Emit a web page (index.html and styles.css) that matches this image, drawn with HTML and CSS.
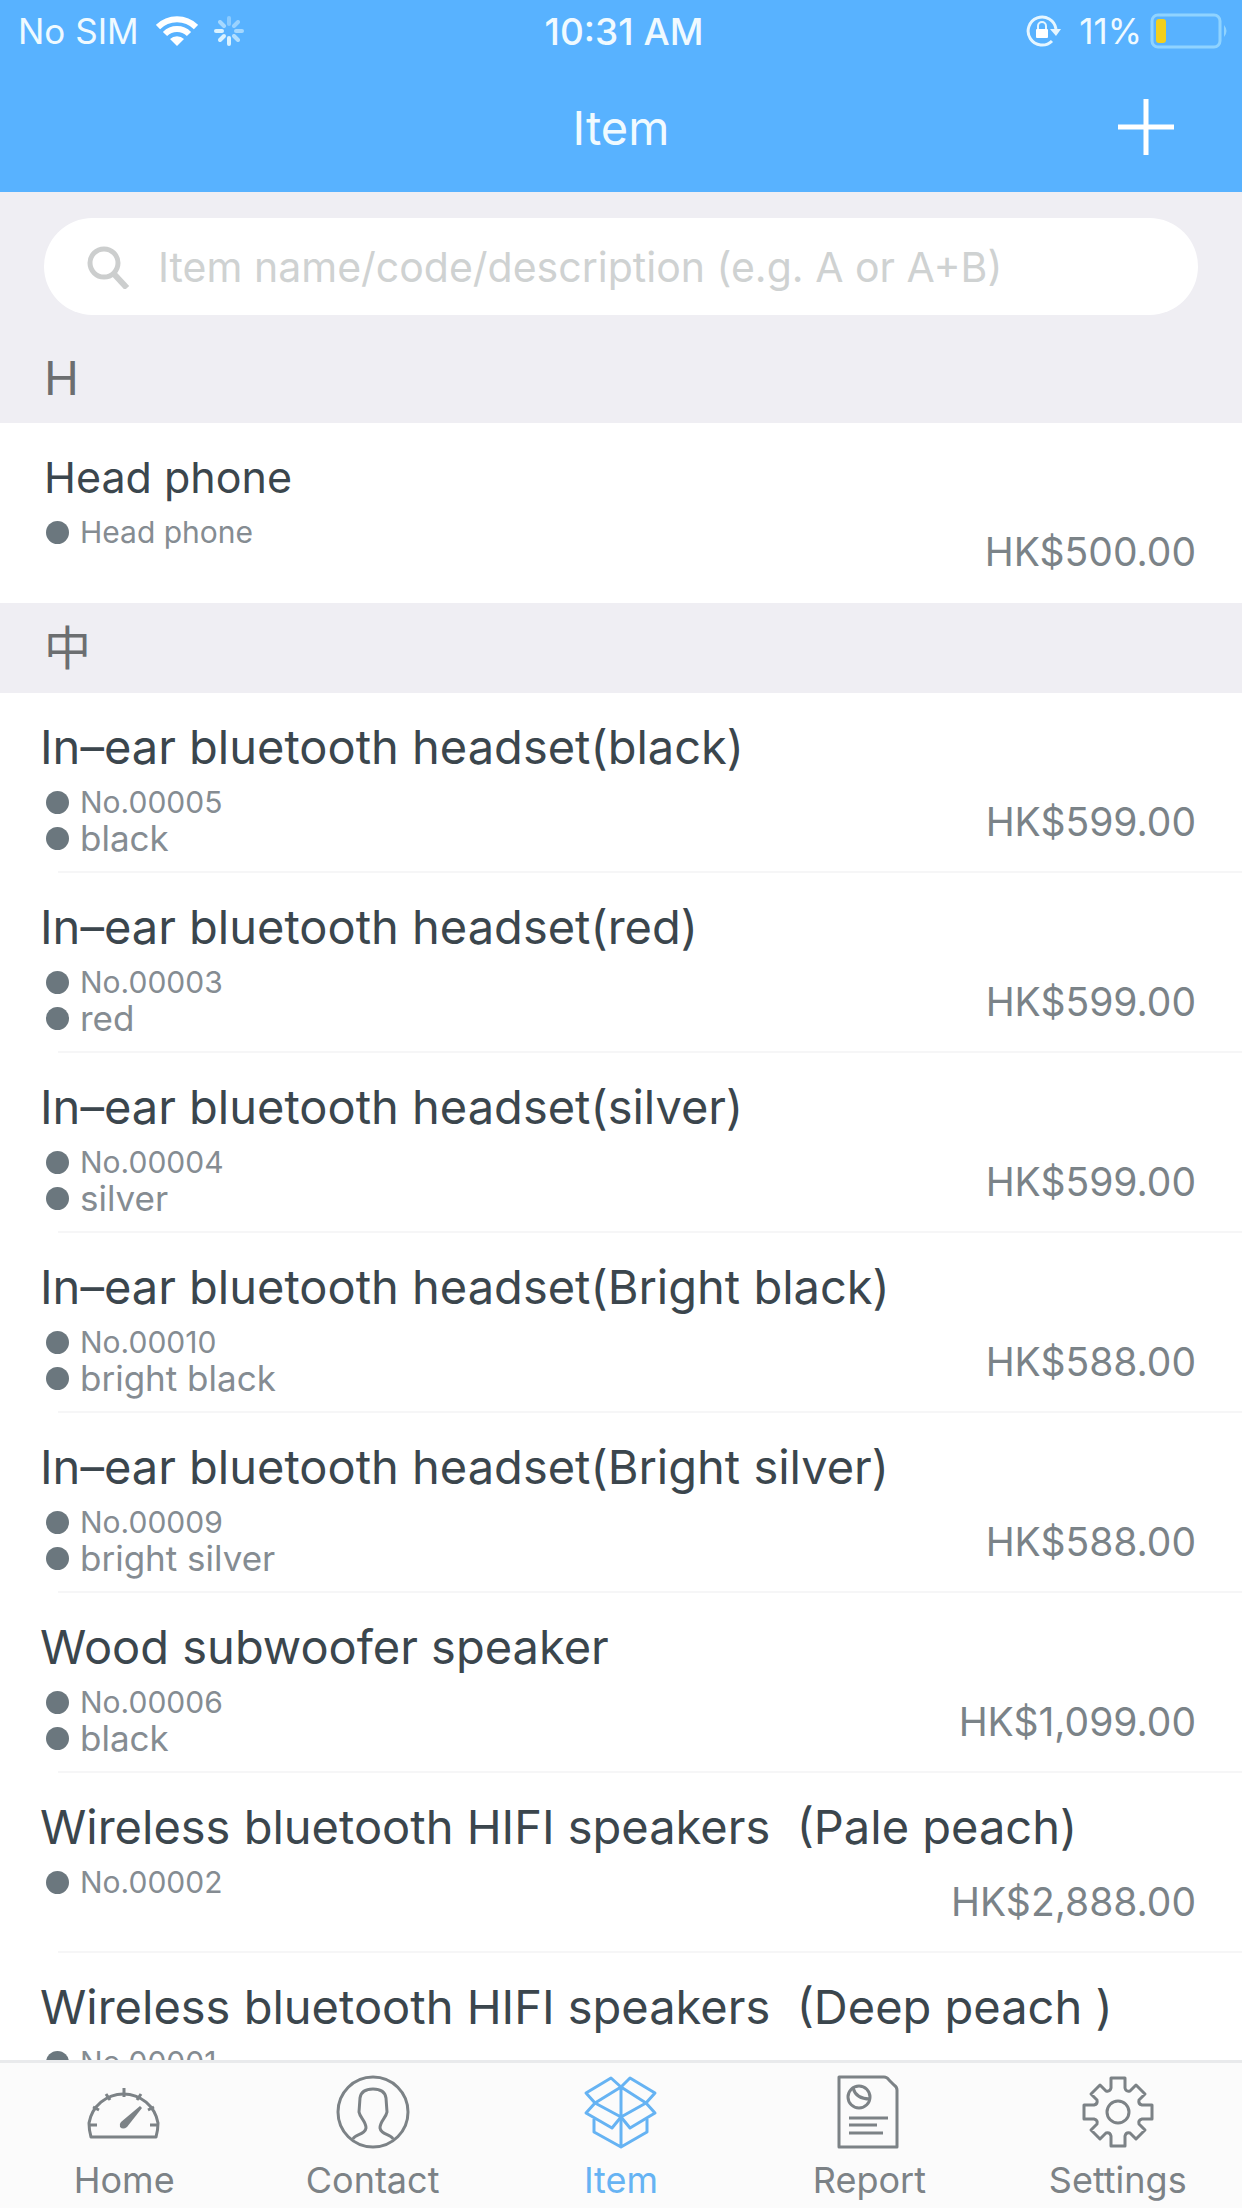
FILE: index.html
```
<!DOCTYPE html>
<html lang="en">
<head>
    <meta charset="UTF-8">
    <meta name="viewport" content="width=device-width, initial-scale=1.0">
    <title>Item</title>
    <link rel="stylesheet" href="styles.css">
</head>
<body>

    <header class="header">
        <div class="status-bar">
            <div class="status-left">
                <span>No SIM</span>
                <svg class="wifi" width="42" height="30" viewBox="0 0 42 30" fill="none" stroke="#fff" stroke-width="6">
                    <path d="M2 11 A27 27 0 0 1 40 11" />
                    <path d="M9 18 A17 17 0 0 1 33 18" />
                    <path d="M21 30 L14 23 A10 10 0 0 1 28 23 Z" fill="#fff" stroke="none" />
                </svg>
                <svg class="spinner" width="32" height="32" viewBox="0 0 32 32" stroke="#d9f2ff" stroke-width="4" stroke-linecap="round">
                    <path d="M16 3V9" opacity=".4" />
                    <path d="M25 7L21 11" opacity=".5" />
                    <path d="M29 16H23" opacity=".6" />
                    <path d="M25 25L21 21" opacity=".7" />
                    <path d="M16 29V23" />
                    <path d="M7 25L11 21" />
                    <path d="M3 16H9" />
                    <path d="M7 7L11 11" opacity=".6" />
                </svg>
            </div>
            <span class="time">10:31 AM</span>
            <div class="status-right">
                <svg width="36" height="32" viewBox="0 0 36 32" fill="none" stroke="#e6f6ff" stroke-width="3">
                    <path d="M26 26 A14 14 0 1 1 30 14" />
                    <path d="M24 14H35L30 21Z" fill="#e6f6ff" stroke="none" />
                    <rect x="10" y="14" width="12" height="9" rx="1" fill="#fff" stroke="none" />
                    <path d="M12 14V11A4 4 0 0 1 20 11V14" stroke-width="2" />
                </svg>
                <span class="percent">11%</span>
                <svg width="80" height="36" viewBox="0 0 80 36" fill="none">
                    <rect x="2" y="2" width="68" height="32" rx="6" stroke="#8fd3ff" stroke-width="3" />
                    <rect x="6" y="6" width="10" height="24" rx="3" fill="#f3cf1c" />
                    <path d="M74 12Q79 18 74 24Z" fill="#8fd3ff" />
                </svg>
            </div>
        </div>
        <div class="nav-bar">
            <h1>Item</h1>
            <button class="add-button" type="button" aria-label="Add item">
                <svg width="56" height="56" viewBox="0 0 56 56" stroke="#fff" stroke-width="5">
                    <path d="M28 0V56M0 28H56" />
                </svg>
            </button>
        </div>
    </header>

    <main class="content">
        <div class="search-area">
            <label class="search-box">
                <svg width="44" height="44" viewBox="0 0 44 44" fill="none" stroke="#cccece" stroke-width="5">
                    <circle cx="17" cy="18" r="14" />
                    <path d="M27 29L40 43" stroke-width="6" />
                </svg>
                <input type="search" aria-label="Search items" placeholder="Item name/code/description (e.g. A or A+B)">
            </label>
        </div>

        <h2 class="section-title">H</h2>
        <ul class="item-list">
            <li class="item">
                <div class="item-info">
                    <h3 class="item-name small">Head phone</h3>
                    <p class="meta code">Head phone</p>
                </div>
                <span class="price">HK$500.00</span>
            </li>
        </ul>

        <h2 class="section-title">中</h2>
        <ul class="item-list">
            <li class="item">
                <div class="item-info">
                    <h3 class="item-name">In–ear bluetooth headset(black)</h3>
                    <p class="meta code">No.00005</p>
                    <p class="meta">black</p>
                </div>
                <span class="price">HK$599.00</span>
            </li>
            <li class="item">
                <div class="item-info">
                    <h3 class="item-name">In–ear bluetooth headset(red)</h3>
                    <p class="meta code">No.00003</p>
                    <p class="meta">red</p>
                </div>
                <span class="price">HK$599.00</span>
            </li>
            <li class="item">
                <div class="item-info">
                    <h3 class="item-name">In–ear bluetooth headset(silver)</h3>
                    <p class="meta code">No.00004</p>
                    <p class="meta">silver</p>
                </div>
                <span class="price">HK$599.00</span>
            </li>
            <li class="item">
                <div class="item-info">
                    <h3 class="item-name">In–ear bluetooth headset(Bright black)</h3>
                    <p class="meta code">No.00010</p>
                    <p class="meta">bright black</p>
                </div>
                <span class="price">HK$588.00</span>
            </li>
            <li class="item">
                <div class="item-info">
                    <h3 class="item-name">In–ear bluetooth headset(Bright silver)</h3>
                    <p class="meta code">No.00009</p>
                    <p class="meta">bright silver</p>
                </div>
                <span class="price">HK$588.00</span>
            </li>
            <li class="item">
                <div class="item-info">
                    <h3 class="item-name">Wood subwoofer speaker</h3>
                    <p class="meta code">No.00006</p>
                    <p class="meta">black</p>
                </div>
                <span class="price">HK$1,099.00</span>
            </li>
            <li class="item">
                <div class="item-info">
                    <h3 class="item-name">Wireless bluetooth HIFI speakers&nbsp; (Pale peach)</h3>
                    <p class="meta code">No.00002</p>
                </div>
                <span class="price">HK$2,888.00</span>
            </li>
            <li class="item">
                <div class="item-info">
                    <h3 class="item-name">Wireless bluetooth HIFI speakers&nbsp; (Deep peach )</h3>
                    <p class="meta code">No.00001</p>
                </div>
            </li>
        </ul>
    </main>

    <nav class="tab-bar">
        <a class="tab" href="#home">
            <svg viewBox="0 0 76 76">
                <path d="M5 63Q3 56 3 49A35 35 0 0 1 72 49Q72 56 70 63Z" />
                <path d="M3 51H11M7 33L13 36M20 20L24 26M38 14V23M55 20L51 26M68 33L62 36M72 51H64" />
                <path class="solid" d="M35 48L54 32L56 34L41 53Q37 56 34 53Q33 50 35 48Z" />
            </svg>
            <span>Home</span>
        </a>
        <a class="tab" href="#contact">
            <svg viewBox="0 0 76 76">
                <circle cx="38" cy="38" r="35" />
                <path d="M18 65C20 60 30 61 31 54C31 47 25 44 24 38L25 24C26 17 31 15 38 15C45 15 50 17 51 24L52 38C51 44 45 47 45 54C46 61 56 60 58 65" />
            </svg>
            <span>Contact</span>
        </a>
        <a class="tab active" href="#item" aria-current="page">
            <svg viewBox="0 0 76 76">
                <path d="M38 13L28 4L3 19L12 29L3 39L29 54L38 43L47 54L72 39L63 29L72 19L47 4Z" />
                <path d="M38 13L12 29L38 43L63 29ZM38 13V73M11 45V58L38 73L64 58V45" />
            </svg>
            <span>Item</span>
        </a>
        <a class="tab" href="#report">
            <svg viewBox="0 0 76 76">
                <path d="M8 3H53Q56 3 58 6L63 11Q66 13 66 16V73H8Z" />
                <circle cx="28" cy="23" r="11" />
                <path d="M22 14Q25 25 39 25M18 44H57M18 51H46M18 59H52" />
            </svg>
            <span>Report</span>
        </a>
        <a class="tab" href="#settings">
            <svg viewBox="0 0 76 76">
                <path d="M31 4H45V14Q46 18 50 17L56 11L65 20L59 26Q58 30 62 31H72V45H62Q58 46 59 50L65 56L56 65L50 59Q46 58 45 62V72H31V62Q30 58 26 59L20 65L11 56L17 50Q18 46 14 45H4V31H14Q18 30 17 26L11 20L20 11L26 17Q30 18 31 14Z" />
                <circle cx="38" cy="38" r="11" />
            </svg>
            <span>Settings</span>
        </a>
    </nav>

</body>
</html>
```
FILE: styles.css
```
* {
    box-sizing: border-box;
}

body {
    display: flex;
    flex-direction: column;
    height: 100vh;
    margin: 0;
    background-color: #ffffff;
    color: #3b464d;
    font-family: Inter, "Noto Sans CJK SC", sans-serif;
}

h1, h2, h3, p, ul {
    margin: 0;
    padding: 0;
}

svg {
    display: block;
    flex-shrink: 0;
}

/* header */
.header {
    flex-shrink: 0;
    background-color: #58b2ff;
    color: #f0faff;
}

.status-bar {
    display: grid;
    grid-template-columns: 1fr auto 1fr;
    align-items: center;
    height: 62px;
    padding: 0 12px 0 18px;
    font-size: 35px;
}

.status-left,
.status-right {
    display: flex;
    align-items: center;
}

.status-right {
    justify-content: flex-end;
}

.wifi {
    margin-left: 17px;
}

.spinner {
    margin-left: 15px;
}

.time {
    font-size: 37px;
    font-weight: 500;
}

.percent {
    margin: 0 8px 0 17px;
}

.nav-bar {
    display: grid;
    grid-template-columns: 1fr auto 1fr;
    align-items: center;
    height: 130px;
    padding: 0 68px;
}

.nav-bar h1 {
    grid-column: 2;
    font-size: 47px;
    font-weight: 400;
}

.add-button {
    justify-self: end;
    padding: 0;
    border: none;
    background: none;
    cursor: pointer;
}

/* list */
.content {
    flex: 1;
    min-height: 0;
    overflow: hidden;
}

.search-area {
    padding: 26px 44px 18px;
    background-color: #efeef3;
}

.search-box {
    display: flex;
    align-items: center;
    gap: 27px;
    height: 97px;
    padding: 0 43px;
    border-radius: 49px;
    background-color: #ffffff;
}

.search-box input {
    flex: 1;
    min-width: 0;
    padding: 0;
    border: none;
    outline: none;
    background: none;
    font-family: inherit;
    font-size: 41px;
}

.search-box input::placeholder {
    color: #cfd2d2;
}

.section-title {
    height: 90px;
    padding-left: 44px;
    background-color: #efeef3;
    color: #6c6e70;
    font-size: 47px;
    font-weight: 400;
    line-height: 90px;
}

.item-list {
    list-style: none;
}

.item {
    position: relative;
    display: flex;
    justify-content: space-between;
    height: 180px;
    padding: 26px 46px 27px 40px;
}

.item:not(:last-child)::after {
    content: "";
    position: absolute;
    right: 0;
    bottom: 0;
    left: 58px;
    height: 2px;
    background-color: #f6f6f7;
}

.item-info {
    min-width: 0;
}

.item-name {
    margin-bottom: 9px;
    font-size: 47px;
    font-weight: 400;
    line-height: 56px;
    white-space: nowrap;
}

.item-name.small {
    padding-left: 4px;
    font-size: 43px;
}

.meta {
    display: flex;
    align-items: center;
    gap: 11px;
    padding-left: 6px;
    color: #858c92;
    font-size: 35px;
    line-height: 36px;
}

.meta::before {
    content: "";
    width: 23px;
    height: 23px;
    border-radius: 50%;
    background-color: #6b777e;
}

.meta.code {
    font-size: 30px;
}

.price {
    align-self: flex-end;
    color: #7b8388;
    font-size: 39px;
    line-height: 48px;
}

/* bottom tabs */
.tab-bar {
    display: grid;
    grid-template-columns: repeat(5, 1fr);
    flex-shrink: 0;
    padding: 11px 0 6px;
    border-top: 3px solid #e9eaec;
    background-color: #fbfbfb;
}

.tab {
    display: flex;
    flex-direction: column;
    align-items: center;
    gap: 8px;
    color: #7c8286;
    font-size: 36px;
    line-height: 44px;
    text-decoration: none;
}

.tab svg {
    width: 76px;
    height: 76px;
    fill: none;
    stroke: currentColor;
    stroke-width: 3;
    stroke-linejoin: round;
}

.tab .solid {
    fill: currentColor;
    stroke: none;
}

.tab.active {
    color: #66b3f3;
}
```
